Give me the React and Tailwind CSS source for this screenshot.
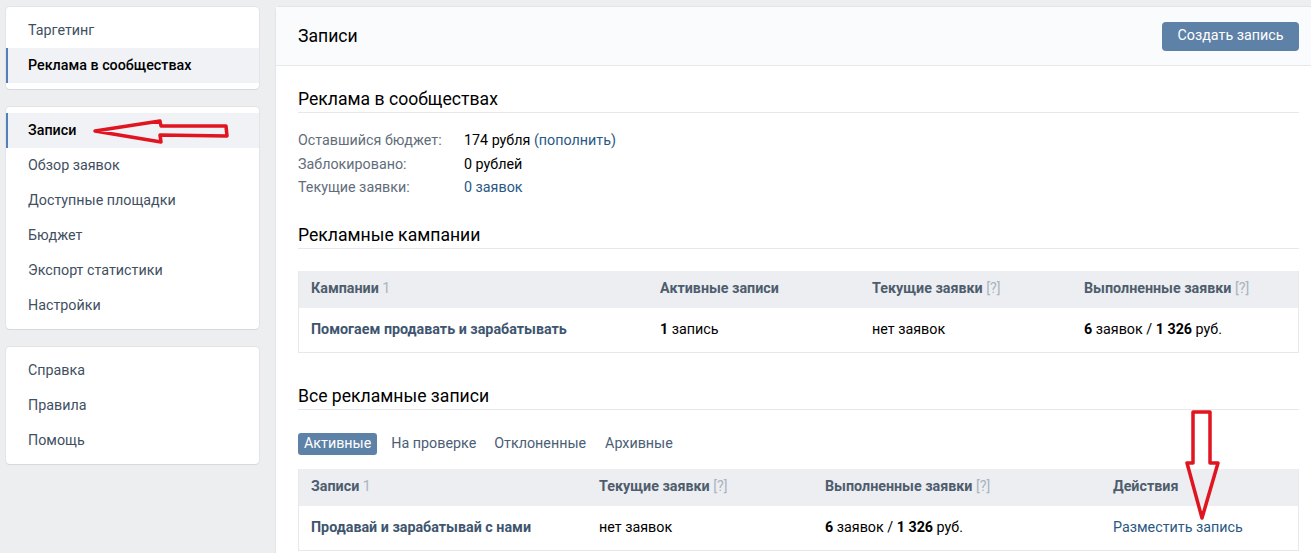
import React from "react";

const font = { fontFamily: "Roboto, 'Open Sans', Arial, sans-serif" };

function SideItem({ children, active }) {
  return (
    <div
      className={
        "h-[35px] flex items-center pl-[20px] text-[14.3px] " +
        (active
          ? "bg-[#f0f2f5] border-l-2 border-[#5181b8] text-black font-medium"
          : "border-l-2 border-transparent text-[#3f5062]")
      }
    >
      {children}
    </div>
  );
}

function Card({ children }) {
  return (
    <div className="bg-white rounded-[4px] shadow-[0_1px_0_0_#d7d8db,0_0_0_1px_#e3e4e8] py-[6px]">
      {children}
    </div>
  );
}

function Heading({ children }) {
  return (
    <div className="border-b border-[#e7e8ec] pb-[3px] text-[17.6px] leading-[20px] text-black">
      {children}
    </div>
  );
}

function Q() {
  return <span className="text-[#aab4c0] font-normal">[?]</span>;
}

export default function App() {
  return (
    <div className="w-[1311px] h-[553px] bg-[#edeef0] overflow-hidden relative" style={font}>
      <div className="flex pt-[7px] pl-[6px] gap-[17px]">
        {/* sidebar */}
        <div className="w-[253px] shrink-0 flex flex-col gap-[18px]">
          <Card>
            <SideItem>Таргетинг</SideItem>
            <SideItem active>Реклама в сообществах</SideItem>
          </Card>
          <Card>
            <SideItem active>Записи</SideItem>
            <SideItem>Обзор заявок</SideItem>
            <SideItem>Доступные площадки</SideItem>
            <SideItem>Бюджет</SideItem>
            <SideItem>Экспорт статистики</SideItem>
            <SideItem>Настройки</SideItem>
          </Card>
          <Card>
            <SideItem>Справка</SideItem>
            <SideItem>Правила</SideItem>
            <SideItem>Помощь</SideItem>
          </Card>
        </div>

        {/* main */}
        <div className="flex-1 bg-white rounded-tl-[4px] shadow-[0_0_0_1px_#e3e4e8] min-h-[600px]">
          <div className="h-[59px] bg-[#fafbfc] border-b border-[#e7e8ec] flex items-center justify-between pl-[22px] pr-[12px]">
            <div className="text-[17.6px] text-black">Записи</div>
            <div className="h-[29px] w-[137px] justify-center rounded-[4px] bg-[#5e81a8] text-white text-[14.3px] flex items-center">
              Создать запись
            </div>
          </div>

          <div className="pl-[22px] pr-[12px] pt-[23px] text-[14.3px]">
            <Heading>Реклама в сообществах</Heading>
            <div className="mt-[16px] leading-[23.5px]">
              <div className="flex">
                <div className="w-[166px] text-[#626d7a]">Оставшийся бюджет:</div>
                <div className="text-black">
                  174 рубля <span className="text-[#2a5885]">(пополнить)</span>
                </div>
              </div>
              <div className="flex">
                <div className="w-[166px] text-[#626d7a]">Заблокировано:</div>
                <div className="text-black">0 рублей</div>
              </div>
              <div className="flex">
                <div className="w-[166px] text-[#626d7a]">Текущие заявки:</div>
                <div className="text-[#2a5885]">0 заявок</div>
              </div>
            </div>

            <div className="mt-[25px]">
              <Heading>Рекламные кампании</Heading>
            </div>

            <div className="mt-[22px] border border-[#e7e8ec] border-t-0">
              <div className="h-[37px] bg-[#eceef1] flex items-center font-bold text-[#4e5d6e]">
                <div className="w-[361px] pl-[12px]">
                  Кампании <span className="text-[#aab4c0] font-normal">1</span>
                </div>
                <div className="w-[212px]">Активные записи</div>
                <div className="w-[212px]">
                  Текущие заявки <Q />
                </div>
                <div>
                  Выполненные заявки <Q />
                </div>
              </div>
              <div className="h-[44px] flex items-center text-black">
                <div className="w-[361px] pl-[12px] font-bold text-[#3e5570]">
                  Помогаем продавать и зарабатывать
                </div>
                <div className="w-[212px]">
                  <b>1</b> запись
                </div>
                <div className="w-[212px]">нет заявок</div>
                <div>
                  <b>6</b> заявок / <b>1 326</b> руб.
                </div>
              </div>
            </div>

            <div className="mt-[33px]">
              <Heading>Все рекламные записи</Heading>
            </div>

            <div className="mt-[23px] flex items-center h-[22px] gap-[14px] text-[#4a5e75]">
              <div className="h-[22px] px-[6px] rounded-[3px] bg-[#5e81a8] text-white flex items-center">
                Активные
              </div>
              <div className="mr-[4px]">На проверке</div>
              <div className="mr-[5px]">Отклоненные</div>
              <div>Архивные</div>
            </div>

            <div className="mt-[14px] border border-[#e7e8ec] border-t-0">
              <div className="h-[37px] bg-[#eceef1] flex items-center font-bold text-[#4e5d6e]">
                <div className="w-[300px] pl-[12px]">
                  Записи <span className="text-[#aab4c0] font-normal">1</span>
                </div>
                <div className="w-[226px]">
                  Текущие заявки <Q />
                </div>
                <div className="w-[288px]">
                  Выполненные заявки <Q />
                </div>
                <div>Действия</div>
              </div>
              <div className="h-[44px] flex items-center text-black">
                <div className="w-[300px] pl-[12px] font-bold text-[#3e5570]">
                  Продавай и зарабатывай с нами
                </div>
                <div className="w-[226px]">нет заявок</div>
                <div className="w-[288px]">
                  <b>6</b> заявок / <b>1 326</b> руб.
                </div>
                <div className="text-[#2a5885]">Разместить запись</div>
              </div>
            </div>
          </div>
        </div>
      </div>

      {/* red annotation arrows */}
      <svg className="absolute left-0 top-0 pointer-events-none" width="1311" height="553">
        <polygon
          points="95,131 160,121 161,126 226,126 227,136 160,135 161,142"
          fill="none"
          stroke="#e0151f"
          strokeWidth="3.5"
          strokeLinejoin="round"
        />
        <polygon
          points="1193,412 1210,412 1210,463 1218,463 1202,518 1187,463 1193,463"
          fill="none"
          stroke="#e0151f"
          strokeWidth="3.5"
          strokeLinejoin="round"
        />
      </svg>
    </div>
  );
}
